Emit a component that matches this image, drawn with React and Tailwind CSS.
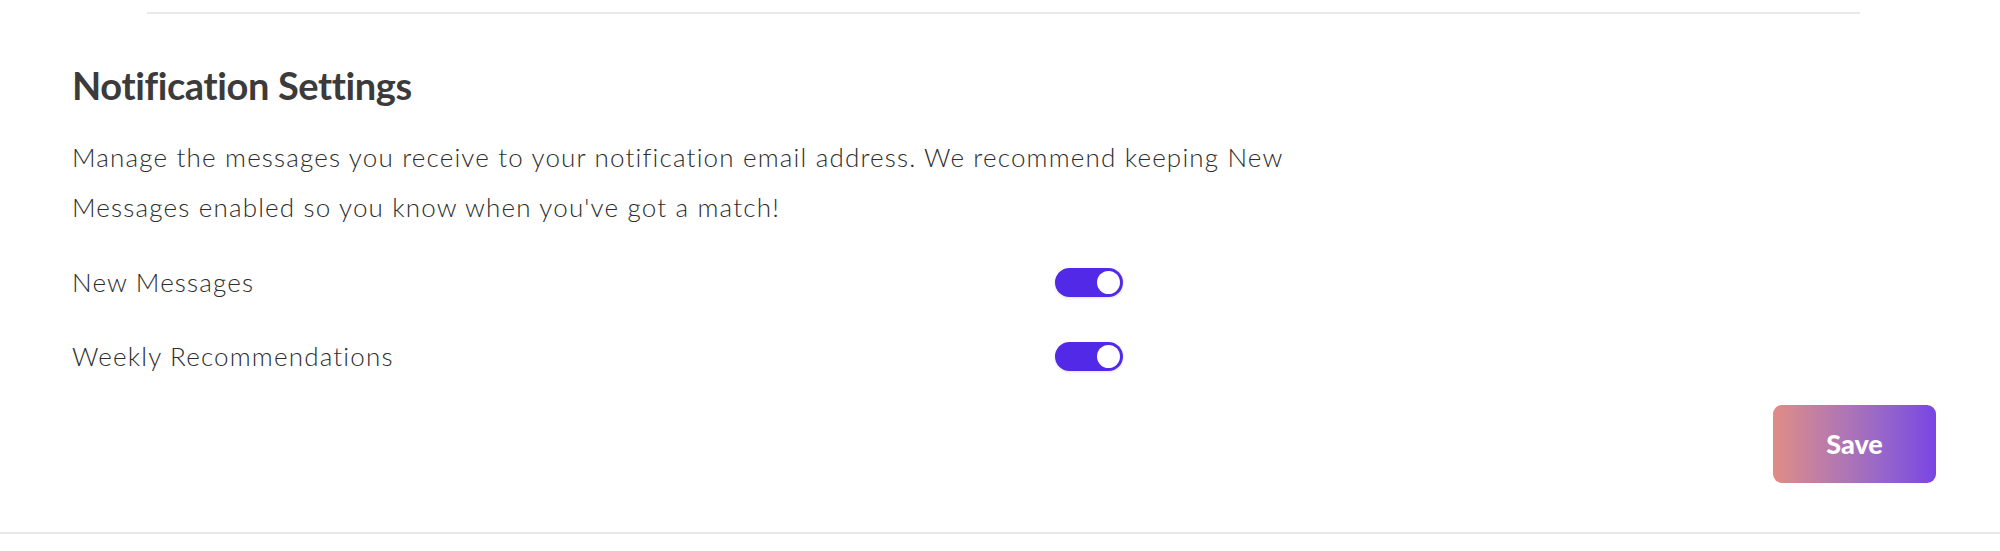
import React from "react";

function Toggle() {
  return (
    <div className="flex h-[29px] w-[68px] items-center justify-end rounded-full bg-[#5229e6] pr-[3px] shadow-[0_1px_3px_rgba(0,0,0,0.12)]">
      <div className="h-[23px] w-[23px] rounded-full bg-white" />
    </div>
  );
}

export default function App() {
  return (
    <div
      className="flex h-[551px] w-[2000px] flex-col bg-white text-[#3a3a3a]"
      style={{ fontFamily: "Lato, 'Noto Sans', sans-serif" }}
    >
      <div className="ml-[147px] mt-[12px] h-[2px] w-[1713px] bg-[#e9e9e9]" />
      <div className="flex flex-col px-[72px]">
        <h2 className="mt-[52px] text-[38px] font-bold leading-[38px] tracking-[-0.01em] text-[#3b3b3b]">
          Notification Settings
        </h2>
        <p className="mt-[28px] max-w-[1270px] text-[26px] font-light leading-[50px] tracking-[0.045em] text-[#2d2d2d]">
          Manage the messages you receive to your notification email address. We recommend keeping New Messages enabled so you know when you've got a match!
        </p>
        <div className="mt-[36px] flex h-[29px] items-center">
          <span className="w-[983px] text-[26px] font-light leading-[29px] tracking-[0.045em] text-[#2d2d2d]">New Messages</span>
          <Toggle />
        </div>
        <div className="mt-[45px] flex h-[29px] items-center">
          <span className="w-[983px] text-[26px] font-light leading-[29px] tracking-[0.045em] text-[#2d2d2d]">Weekly Recommendations</span>
          <Toggle />
        </div>
      </div>
      <div className="mt-[34px] flex justify-end pr-[64px]">
        <button className="flex h-[78px] w-[163px] items-center justify-center rounded-[9px] bg-linear-to-r from-[#e18c84] to-[#7944e4] text-[27px] font-black text-white">
          Save
        </button>
      </div>
      <div className="mt-[49px] h-[2px] w-full bg-[#e8e8e8]" />
    </div>
  );
}
